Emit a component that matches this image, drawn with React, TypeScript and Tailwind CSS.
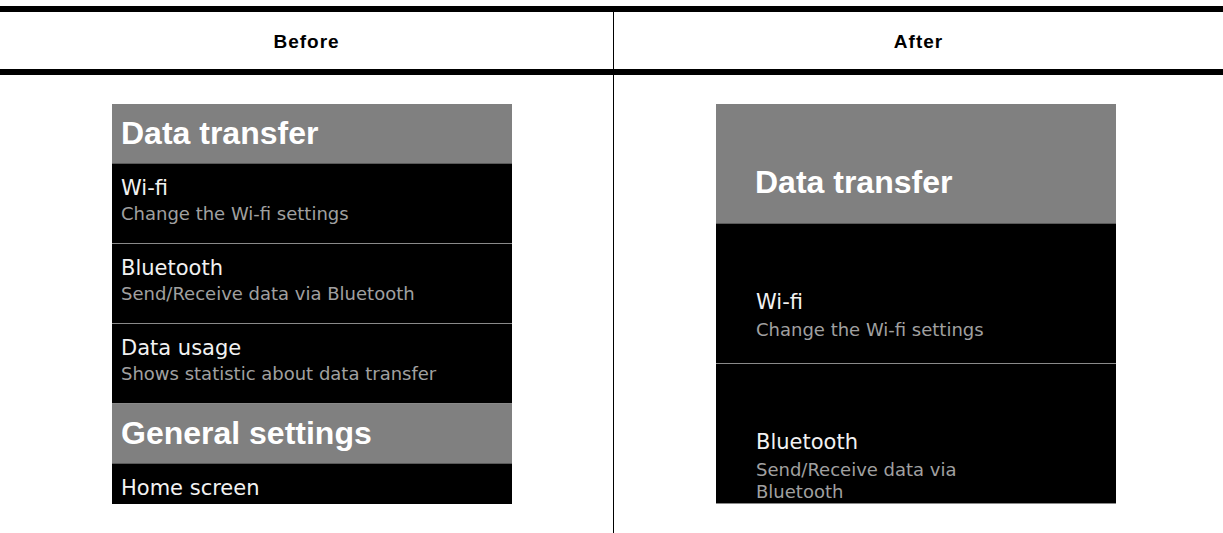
const headFont = { fontFamily: '"Liberation Sans", Arial, sans-serif' };

type Row = { title: string; sub: string };

const dataRows: Row[] = [
  { title: 'Wi-fi', sub: 'Change the Wi-fi settings' },
  { title: 'Bluetooth', sub: 'Send/Receive data via Bluetooth' },
  { title: 'Data usage', sub: 'Shows statistic about data transfer' },
];

function SmallItem({ row }: { row: Row }) {
  return (
    <div className="h-[80px] shrink-0 border-b border-[#8a8a8a] bg-black pl-[9px] pt-[12px] flex flex-col gap-[4px] font-['DejaVu_Sans',sans-serif]">
      <div className="text-[21px] leading-[24px] text-[#f2f2f2]">{row.title}</div>
      {row.sub && <div className="text-[18px] leading-[20px] text-[#a0a0a0]">{row.sub}</div>}
    </div>
  );
}

function SmallHeader({ label }: { label: string }) {
  return (
    <div
      className="h-[60px] shrink-0 bg-[#808080] border-b border-[#5a5a5a] pl-[9px] pt-[11px] text-[32px] leading-[36px] font-bold text-white"
      style={headFont}
    >
      {label}
    </div>
  );
}

function BigItem({ row }: { row: Row }) {
  return (
    <div className="h-[140px] shrink-0 border-b border-[#8a8a8a] bg-black pl-[40px] pt-[66px] flex flex-col gap-[5px] font-['DejaVu_Sans',sans-serif]">
      <div className="text-[21px] leading-[24px] text-[#f2f2f2]">{row.title}</div>
      <div className="w-[280px] text-[18px] leading-[22px] text-[#a0a0a0]">{row.sub}</div>
    </div>
  );
}

export default function App() {
  return (
    <div className="w-[1223px] h-[533px] bg-white overflow-hidden">
      <div className="mt-[6px] border-t-[6px] border-black">
        {/* Column titles */}
        <div className="grid grid-cols-[613px_1px_1fr] h-[63px] border-b-[6px] border-black">
          <div
            className="flex items-center justify-center pt-[4px] text-[19px] font-bold tracking-[1px] text-black"
            style={headFont}
          >
            Before
          </div>
          <div className="bg-black" />
          <div
            className="flex items-center justify-center pt-[4px] text-[19px] font-bold tracking-[1px] text-black"
            style={headFont}
          >
            After
          </div>
        </div>

        {/* Screens */}
        <div className="grid grid-cols-[613px_1px_1fr] h-[458px]">
          <div className="pl-[112px] pt-[29px]">
            <div className="w-[400px] h-[400px] bg-black overflow-hidden flex flex-col">
              <SmallHeader label="Data transfer" />
              {dataRows.map((r) => (
                <SmallItem key={r.title} row={r} />
              ))}
              <SmallHeader label="General settings" />
              <SmallItem row={{ title: 'Home screen', sub: '' }} />
            </div>
          </div>
          <div className="bg-black" />
          <div className="pl-[102px] pt-[29px]">
            <div className="w-[400px] h-[400px] bg-black overflow-hidden flex flex-col">
              <div
                className="h-[120px] shrink-0 bg-[#808080] border-b border-[#5a5a5a] pl-[39px] pt-[60px] text-[32px] leading-[36px] font-bold text-white"
                style={headFont}
              >
                Data transfer
              </div>
              <BigItem row={dataRows[0]} />
              <BigItem row={dataRows[1]} />
            </div>
          </div>
        </div>
      </div>
    </div>
  );
}
